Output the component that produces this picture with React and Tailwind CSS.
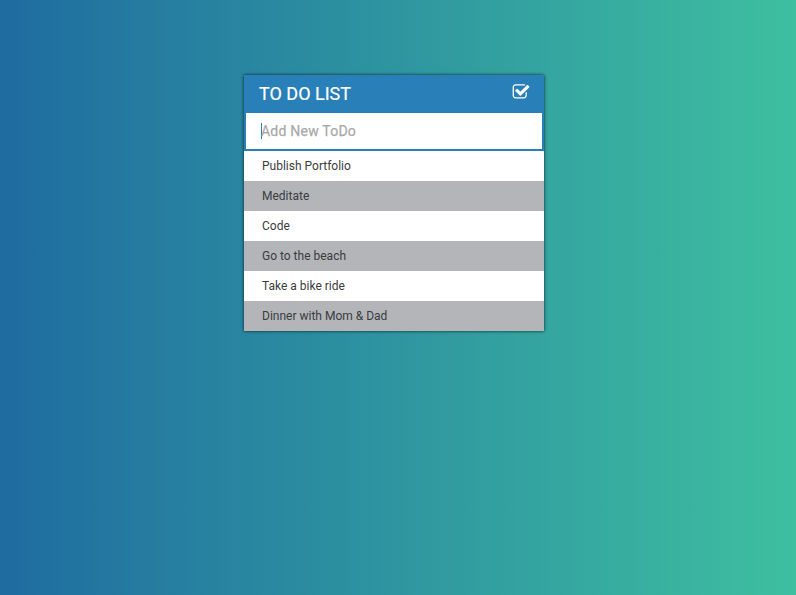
const todos = [
  "Publish Portfolio",
  "Meditate",
  "Code",
  "Go to the beach",
  "Take a bike ride",
  "Dinner with Mom & Dad",
];

function CheckIcon() {
  return (
    <svg viewBox="0 0 1792 1792" className="mt-[7.5px] size-[18px] fill-white" aria-hidden="true">
      <path d="M1472 930v318q0 119-84.5 203.5t-203.5 84.5h-832q-119 0-203.5-84.5t-84.5-203.5v-832q0-119 84.5-203.5t203.5-84.5h832q63 0 117 25 15 7 18 23 3 17-9 29l-49 49q-10 10-23 10-3 0-9-2-23-6-45-6h-832q-66 0-113 47t-47 113v832q0 66 47 113t113 47h832q66 0 113-47t47-113v-254q0-13 9-22l64-64q10-10 23-10 6 0 12 3 20 8 20 29zm231-489l-814 814q-24 24-57 24t-57-24l-430-430q-24-24-24-57t24-57l110-110q24-24 57-24t57 24l263 263 647-647q24-24 57-24t57 24l110 110q24 24 24 57t-24 57z" />
    </svg>
  );
}

export default function App() {
  return (
    <div className="min-h-screen bg-linear-to-r/srgb from-[#1f6ca0] to-[#3ebfa0] pt-[75px] pl-[244px] font-['Roboto',sans-serif]">
      <main className="w-[300px] bg-white shadow-[0_0_3px_rgba(0,0,0,0.8)]">
        <header className="flex h-[38px] items-start justify-between bg-[#2980b9] pr-[14.5px] pl-[15px] text-white">
          <h1 className="text-lg leading-[38px] font-normal [-webkit-text-stroke:0.2px_white]">TO DO LIST</h1>
          <CheckIcon />
        </header>
        <div className="flex h-[38px] items-center border-x-2 border-b-2 border-[#2980b9] pl-[15px]">
          <span className="-mr-px h-4 w-px bg-[#2980b9]" />
          <span className="text-sm font-normal tracking-[0.22px] text-[#a9a9a9] [-webkit-text-stroke:0.25px_#a9a9a9]">Add New ToDo</span>
        </div>
        <ul className="text-xs text-[#3a3c40]">
          {todos.map((todo) => (
            <li key={todo} className="h-[30px] pl-[18px] leading-[30px] odd:bg-white even:bg-[#b3b5b9]">
              {todo}
            </li>
          ))}
        </ul>
      </main>
    </div>
  );
}
